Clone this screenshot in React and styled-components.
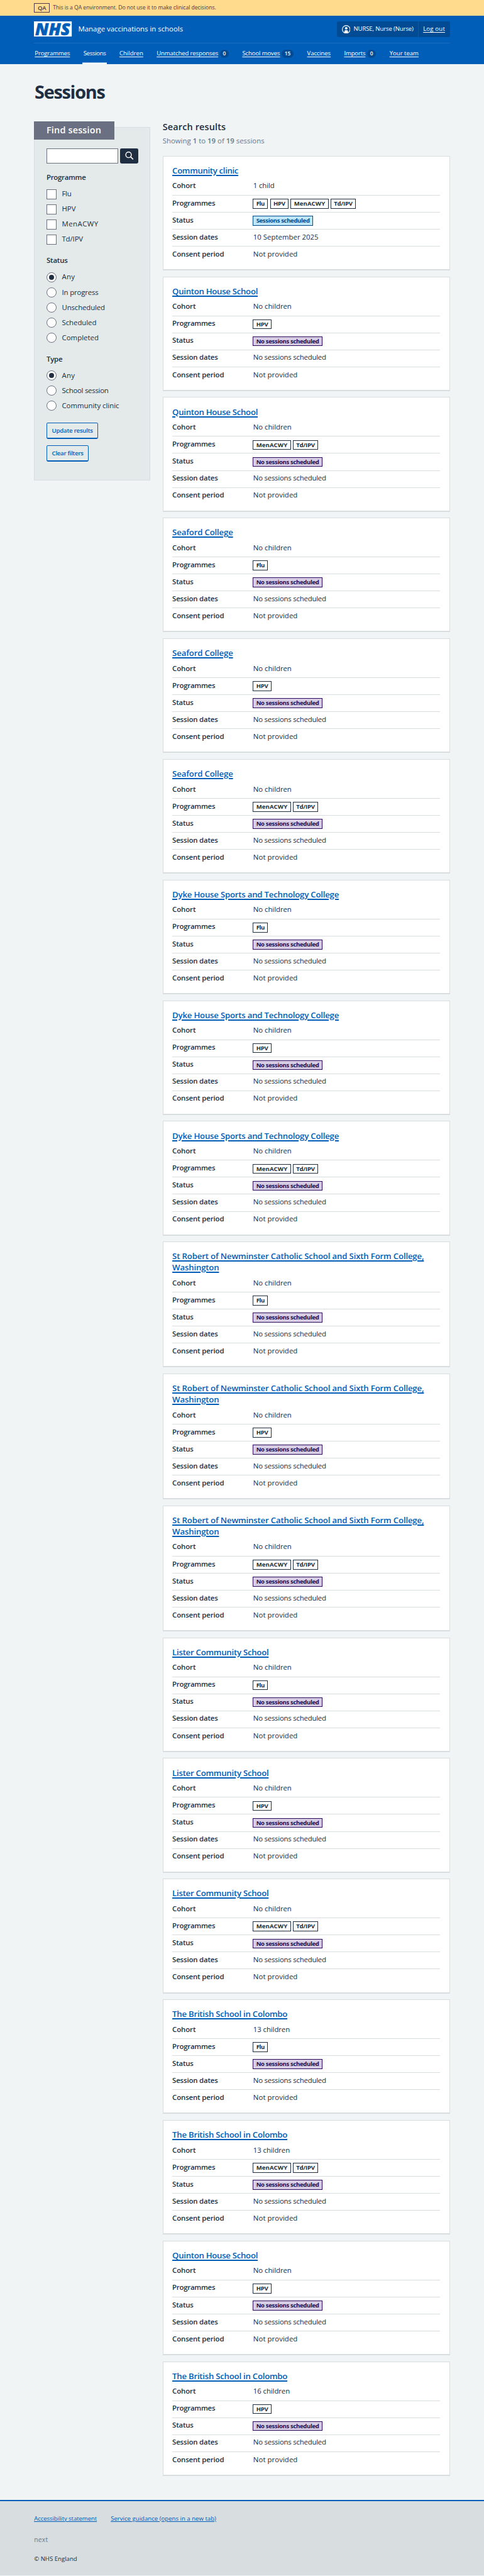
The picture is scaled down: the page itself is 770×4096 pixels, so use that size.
import React from 'react';
import styled, { createGlobalStyle, css } from 'styled-components';

/* 1rem equals ten design pixels */
const GlobalStyle = createGlobalStyle`
  *, *::before, *::after { box-sizing: border-box; }
  html { font-size: 6.015625px; }
  body {
    margin: 0;
    background: #f0f4f5;
    color: #202e42;
    font-family: "Open Sans", "Noto Sans", sans-serif;
    font-size: 1.9rem;
    line-height: 2.8rem;
  }
  h1, h2, h3, p, dl, dt, dd, ul { margin: 0; padding: 0; font: inherit; }
`;

const tracked = css`letter-spacing: ${(p) => (p.$track || 0) / 10}rem;`;

const Text = styled.span`
  white-space: nowrap;
  ${tracked}
`;

const Container = styled.div`
  width: 110rem;
  margin: 0 auto;
`;

/* ---------- environment banner ---------- */

const Banner = styled.div`
  height: 4.2rem;
  background: #ffdb8e;
  color: #4f3a45;
`;

const BannerInner = styled(Container)`
  display: flex;
  align-items: center;
  gap: 0.82rem;
  height: 100%;
  font-size: 1.44rem;
`;

const BannerTag = styled.strong`
  display: flex;
  align-items: center;
  justify-content: center;
  width: 4.2rem;
  height: 2.6rem;
  border: 1px solid #4f3a45;
  font-size: 1.6rem;
  font-weight: 600;
  line-height: 1;
`;

/* ---------- header ---------- */

const Header = styled.header`
  height: 12.8rem;
  background: #005eb8;
  color: #fff;
`;

const HeaderTop = styled.div`
  display: flex;
  align-items: center;
  height: 7.2rem;
  border-bottom: 1px solid #1a6dbf;
`;

const Logo = styled.svg`
  display: block;
  width: 10rem;
  height: 4rem;
  overflow: visible;
`;

const ServiceName = styled.span`
  margin-left: 1.7rem;
  white-space: nowrap;
`;

const Account = styled.div`
  display: flex;
  height: 4.2rem;
  margin-left: auto;
  border-radius: 0.4rem;
  background: #004b93;
  font-size: 1.6rem;
`;

const AccountUser = styled.div`
  display: flex;
  align-items: center;
  gap: 0.85rem;
  width: 21.65rem;
  padding-left: 1.35rem;
  border-right: 1px solid #005eb8;
`;

const AccountAction = styled.a`
  display: flex;
  align-items: center;
  width: 8.3rem;
  padding-left: 1.2rem;
  text-decoration: underline;
  text-underline-offset: 0.25rem;
`;

const UserIcon = styled.svg`
  width: 2.25rem;
  height: 2.25rem;
`;

const Nav = styled.nav`
  display: flex;
  gap: 3.16rem;
  height: 5.6rem;
  font-size: 1.6rem;
`;

const NavItem = styled.a`
  display: flex;
  align-items: center;
  gap: 0.42rem;
  padding: 0 0.2rem;
  box-shadow: ${(p) => (p.$active ? 'inset 0 -0.4rem #fff' : 'none')};

  ${Text} {
    text-decoration: ${(p) => (p.$active ? 'none' : 'underline')};
    text-underline-offset: 0.25rem;
  }
`;

const Count = styled.span`
  display: flex;
  align-items: center;
  justify-content: center;
  min-width: 2.4rem;
  height: 2.2rem;
  padding: 0 0.8rem;
  border-radius: 1.2rem;
  background: #004b93;
  font-size: 1.4rem;
  font-weight: 600;
  line-height: 1;
`;

/* ---------- page ---------- */

const Main = styled(Container).attrs({ as: 'main' })`
  padding: 4.46rem 0 6.34rem;
`;

const PageTitle = styled.h1`
  height: 5.5rem;
  margin: 0 0 5.14rem 0.15rem;
  font-size: 4.8rem;
  font-weight: 700;
  line-height: 5.5rem;
  ${tracked}
`;

const Columns = styled.div`
  display: flex;
  align-items: flex-start;
  gap: 3.2rem;
`;

/* ---------- filters ---------- */

const Filters = styled.aside`
  flex: none;
  width: 30.8rem;
  height: 93.4rem;
  margin-top: 1.5rem;
  padding: 0 calc(3.3rem - 1px);
  border: 1px solid #d8dde0;
  background: #e4eaea;
`;

const FiltersTitle = styled.h2`
  width: 21.2rem;
  height: 4.8rem;
  margin: calc(-1.5rem - 1px) 0 2.4rem -3.3rem;
  padding-left: 3.3rem;
  background: #6b6f82;
  color: #fff;
  font-size: 2.4rem;
  font-weight: 600;
  line-height: 4.8rem;
  ${tracked}
`;

const SearchRow = styled.div`
  display: flex;
  gap: 0.4rem;
  height: 4rem;
`;

const SearchField = styled.input`
  width: 19rem;
  height: 4rem;
  padding: 0 0.5rem;
  border: 0.2rem solid #6b6f82;
  border-radius: 0;
  background: #fff;
  font: inherit;
`;

const SearchButton = styled.button`
  width: 4.8rem;
  height: 4rem;
  padding: 0;
  border: 0;
  border-radius: 0.4rem;
  background: #202e42;

  svg {
    display: block;
    width: 4.8rem;
    height: 4rem;
  }
`;

const Group = styled.div`
  padding-top: 2.23rem;
`;

const GroupTitle = styled.h3`
  height: 2.8rem;
  margin-bottom: 0.97rem;
  font-weight: 600;
  ${tracked}
`;

const Option = styled.label`
  display: flex;
  align-items: center;
  gap: 1.4rem;
  height: 4rem;
`;

const Control = styled.span`
  display: flex;
  align-items: center;
  justify-content: center;
  width: 2.67rem;
  height: 2.67rem;
  border: 0.2rem solid #6b6f82;
  border-radius: ${(p) => (p.$round ? '50%' : '0')};
  background: #fff;

  &::after {
    content: "";
    display: ${(p) => (p.$on ? 'block' : 'none')};
    width: 1.35rem;
    height: 1.35rem;
    border-radius: 50%;
    background: #202e42;
  }
`;

const Actions = styled.div`
  display: flex;
  flex-direction: column;
  align-items: flex-start;
  gap: 1.6rem;
  padding-top: 2.4rem;
`;

const Button = styled.button`
  display: flex;
  align-items: center;
  justify-content: center;
  width: ${(p) => p.$width / 10}rem;
  height: 4.4rem;
  padding: 0;
  border: solid #005eb8;
  border-width: 0.2rem 0.2rem 0.4rem;
  border-radius: 0.4rem;
  background: transparent;
  color: #005eb8;
  font: 600 1.6rem/1 "Open Sans", sans-serif;
`;

/* ---------- results ---------- */

const Results = styled.section`
  width: 76rem;
`;

const ResultsTitle = styled.h2`
  height: 2.9rem;
  font-size: 2.4rem;
  font-weight: 600;
  line-height: 2.9rem;
  ${tracked}
`;

const ResultsCount = styled.p`
  height: 2.8rem;
  margin: 0.86rem 0 2.54rem;
  color: #6b7488;

  b { font-weight: 600; }
`;

const CardList = styled.div`
  display: flex;
  flex-direction: column;
  gap: 1.6rem;
`;

const Card = styled.article`
  padding: 2.35rem 2.4rem 1.5rem;
  border: 1px solid #d8dde0;
  border-bottom-width: 0.4rem;
  background: #fff;
`;

const CardTitle = styled.h3`
  margin-bottom: 0.463rem;
  color: #005eb8;
  font-size: 2.2rem;
  font-weight: 600;
  line-height: 2.987rem;
  text-decoration: underline;
  text-decoration-thickness: 0.3rem;
  text-underline-offset: 0.25rem;
  ${tracked}
`;

const Row = styled.div`
  display: flex;
  align-items: center;
  height: 4.5rem;
  border-bottom: 1px solid ${(p) => (p.$last ? 'transparent' : '#d8dde0')};
`;

const Key = styled.dt`
  width: 21.3rem;
  padding-bottom: 0.28rem;
  font-weight: 600;
`;

const Value = styled.dd`
  padding: 0 0 0.28rem 0.1rem;
`;

const Tags = styled.dd`
  display: flex;
  gap: 0.53rem;
`;

const tones = {
  plain: css`border-color: #202e42; background: #fff; color: #202e42;`,
  blue: css`border-color: #004b8d; background: #bee6f8; color: #004b8d;`,
  purple: css`border-color: #2d0a5a; background: #d6cce4; color: #220d50;`,
};

const Tag = styled.strong`
  display: flex;
  align-items: center;
  height: 2.6rem;
  padding: 0 calc(0.9rem - 1px);
  border: 1px solid;
  font-size: 1.6rem;
  font-weight: 700;
  line-height: 1;
  ${(p) => tones[p.$tone || 'plain']}
`;

/* ---------- footer ---------- */

const Footer = styled.footer`
  height: 19.9rem;
  padding-top: 3.45rem;
  border-top: 0.4rem solid #005eb8;
  background: #d8dde0;
  font-size: 1.6rem;
  line-height: 2.4rem;
`;

const FooterLinks = styled.div`
  display: flex;
  gap: 3.67rem;
  color: #005eb8;
  text-decoration: underline;
  text-underline-offset: 0.2rem;
`;

const Release = styled.p`
  margin: 3.13rem 0 2.75rem;
  color: #6b7488;
  font-size: 1.7rem;
`;

/* ---------- data ---------- */

const nav = [
  { label: 'Programmes', track: -0.3 },
  { label: 'Sessions', track: -0.56, active: true },
  { label: 'Children', track: 0 },
  { label: 'Unmatched responses', track: -0.26, count: 0 },
  { label: 'School moves', track: -0.24, count: 15 },
  { label: 'Vaccines', track: -0.23 },
  { label: 'Imports', track: -0.31, count: 0 },
  { label: 'Your team', track: -0.05 },
];

const filterGroups = [
  {
    title: 'Programme',
    track: -0.49,
    options: [['Flu', -0.42], ['HPV', 0], ['MenACWY', 0.78], ['Td/IPV', -0.19]],
  },
  {
    title: 'Status',
    track: -0.3,
    round: true,
    options: [['Any', 0.5], ['In progress', -0.26], ['Unscheduled', -0.21], ['Scheduled', -0.08], ['Completed', 0.04]],
  },
  {
    title: 'Type',
    track: -0.42,
    round: true,
    options: [['Any', 0.5], ['School session', -0.43], ['Community clinic', -0.03]],
  },
];

const places = {
  clinic: ['Community clinic', -0.57],
  quinton: ['Quinton House School', -0.5],
  seaford: ['Seaford College', -0.29],
  dyke: ['Dyke House Sports and Technology College', -0.37],
  robert: ['St Robert of Newminster Catholic School and Sixth Form College, Washington', -0.29],
  lister: ['Lister Community School', -0.43],
  colombo: ['The British School in Colombo', -0.42],
};

const programmeTracks = { Flu: -0.7, HPV: -0.5, MenACWY: 0.12, 'Td/IPV': -0.48 };
const cohortTracks = { 'No children': -0.11, '1 child': -0.25, '13 children': -0.16, '16 children': -0.16 };

const flu = ['Flu'];
const hpv = ['HPV'];
const teenage = ['MenACWY', 'Td/IPV'];
const none = 'No children';

const sessions = [
  { place: 'clinic', cohort: '1 child', programmes: ['Flu', 'HPV', 'MenACWY', 'Td/IPV'], date: '10 September 2025' },
  { place: 'quinton', cohort: none, programmes: hpv },
  { place: 'quinton', cohort: none, programmes: teenage },
  { place: 'seaford', cohort: none, programmes: flu },
  { place: 'seaford', cohort: none, programmes: hpv },
  { place: 'seaford', cohort: none, programmes: teenage },
  { place: 'dyke', cohort: none, programmes: flu },
  { place: 'dyke', cohort: none, programmes: hpv },
  { place: 'dyke', cohort: none, programmes: teenage },
  { place: 'robert', cohort: none, programmes: flu },
  { place: 'robert', cohort: none, programmes: hpv },
  { place: 'robert', cohort: none, programmes: teenage },
  { place: 'lister', cohort: none, programmes: flu },
  { place: 'lister', cohort: none, programmes: hpv },
  { place: 'lister', cohort: none, programmes: teenage },
  { place: 'colombo', cohort: '13 children', programmes: flu },
  { place: 'colombo', cohort: '13 children', programmes: teenage },
  { place: 'quinton', cohort: none, programmes: hpv },
  { place: 'colombo', cohort: '16 children', programmes: hpv },
];

/* ---------- parts ---------- */

function NhsLogo() {
  return (
    <Logo viewBox="0 0 100 40" role="img" aria-label="NHS">
      <rect width="100" height="40" fill="#fff" />
      <text
        x="3.5"
        y="36"
        textLength="92"
        lengthAdjust="spacingAndGlyphs"
        fill="#005eb8"
        stroke="#005eb8"
        strokeWidth="1"
        fontFamily="Open Sans"
        fontSize="45"
        fontWeight="800"
        fontStyle="italic"
      >
        NHS
      </text>
    </Logo>
  );
}

function SessionCard({ place, cohort, programmes, date }) {
  const [title, track] = places[place];
  return (
    <Card>
      <CardTitle $track={track}>{title}</CardTitle>
      <dl>
        <Row>
          <Key><Text $track={-0.17}>Cohort</Text></Key>
          <Value><Text $track={cohortTracks[cohort]}>{cohort}</Text></Value>
        </Row>
        <Row>
          <Key><Text $track={-0.42}>Programmes</Text></Key>
          <Tags>
            {programmes.map((name) => (
              <Tag key={name}><Text $track={programmeTracks[name]}>{name}</Text></Tag>
            ))}
          </Tags>
        </Row>
        <Row>
          <Key><Text $track={-0.3}>Status</Text></Key>
          <Tags>
            {date
              ? <Tag $tone="blue"><Text $track={-0.63}>Sessions scheduled</Text></Tag>
              : <Tag $tone="purple"><Text $track={-0.6}>No sessions scheduled</Text></Tag>}
          </Tags>
        </Row>
        <Row>
          <Key><Text $track={-0.28}>Session dates</Text></Key>
          <Value>
            {date
              ? <Text>{date}</Text>
              : <Text $track={-0.39}>No sessions scheduled</Text>}
          </Value>
        </Row>
        <Row $last>
          <Key><Text $track={-0.22}>Consent period</Text></Key>
          <Value><Text $track={0.09}>Not provided</Text></Value>
        </Row>
      </dl>
    </Card>
  );
}

export default function App() {
  return (
    <>
      <GlobalStyle />
      <Banner>
        <BannerInner>
          <BannerTag><Text $track={-0.4}>QA</Text></BannerTag>
          <Text $track={-0.09}>This is a QA environment. Do not use it to make clinical decisions.</Text>
        </BannerInner>
      </Banner>

      <Header>
        <Container>
          <HeaderTop>
            <NhsLogo />
            <ServiceName>Manage vaccinations in schools</ServiceName>
            <Account>
              <AccountUser>
                <UserIcon viewBox="0 0 24 24" aria-hidden="true">
                  <circle cx="12" cy="12" r="10.9" fill="none" stroke="#fff" strokeWidth="2" />
                  <circle cx="12" cy="8.9" r="3.7" fill="#fff" />
                  <path d="M6.8 21.2V18a4 4 0 0 1 4-4h2.4a4 4 0 0 1 4 4v3.2A11 11 0 0 1 12 23a11 11 0 0 1-5.2-1.8z" fill="#fff" />
                </UserIcon>
                <Text $track={-0.22}>NURSE, Nurse (Nurse)</Text>
              </AccountUser>
              <AccountAction><Text $track={0.29}>Log out</Text></AccountAction>
            </Account>
          </HeaderTop>
          <Nav>
            {nav.map(({ label, track, active, count }) => (
              <NavItem key={label} $active={active}>
                <Text $track={track}>{label}</Text>
                {count !== undefined && <Count>{count}</Count>}
              </NavItem>
            ))}
          </Nav>
        </Container>
      </Header>

      <Main>
        <PageTitle $track={-2.1}>Sessions</PageTitle>
        <Columns>
          <Filters>
            <FiltersTitle $track={0.3}>Find session</FiltersTitle>
            <SearchRow>
              <SearchField aria-label="Search" />
              <SearchButton aria-label="Search">
                <svg viewBox="0 0 48 40" fill="none" stroke="#fff" strokeWidth="2.4" strokeLinecap="round">
                  <circle cx="22.5" cy="17" r="7.3" />
                  <path d="M27.9 22.4 33.8 28" strokeWidth="2.8" />
                </svg>
              </SearchButton>
            </SearchRow>
            {filterGroups.map(({ title, track, round, options }) => (
              <Group key={title}>
                <GroupTitle $track={track}>{title}</GroupTitle>
                {options.map(([label, labelTrack]) => (
                  <Option key={label}>
                    <Control $round={round} $on={label === 'Any'} />
                    <Text $track={labelTrack}>{label}</Text>
                  </Option>
                ))}
              </Group>
            ))}
            <Actions>
              <Button $width={137}><Text $track={-0.35}>Update results</Text></Button>
              <Button $width={112}><Text $track={-0.43}>Clear filters</Text></Button>
            </Actions>
          </Filters>

          <Results>
            <ResultsTitle $track={0.26}>Search results</ResultsTitle>
            <ResultsCount>
              Showing <b>1</b> to <b>19</b> of <b>19</b> sessions
            </ResultsCount>
            <CardList>
              {sessions.map((session, index) => (
                <SessionCard key={index} {...session} />
              ))}
            </CardList>
          </Results>
        </Columns>
      </Main>

      <Footer>
        <Container>
          <FooterLinks>
            <Text $track={-0.14}>Accessibility statement</Text>
            <Text>Service guidance (opens in a new tab)</Text>
          </FooterLinks>
          <Release><Text $track={0.5}>next</Text></Release>
          <Text>© NHS England</Text>
        </Container>
      </Footer>
    </>
  );
}
